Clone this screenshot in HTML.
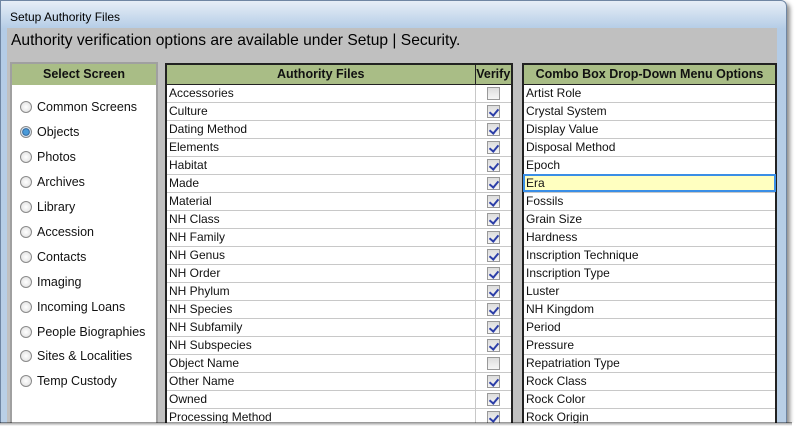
<!DOCTYPE html>
<html><head><meta charset="utf-8"><style>
*{margin:0;padding:0;box-sizing:border-box}
body{width:796px;height:433px;background:#fff;position:relative;overflow:hidden;font-family:"Liberation Sans",Arial,sans-serif;}
.abs{position:absolute}
.win{left:0;top:0;width:787px;height:424px;background:linear-gradient(#e6eef7,#b4cce6 28px,#b9cfe6);border:1px solid #6f86a3;border-top-right-radius:6px;box-shadow:3px 3px 4px rgba(0,0,0,.45)}
.title{left:10px;top:10px;font-size:12px;color:#000}
.gray{left:7px;top:28px;width:770px;height:400px;background:#c0c0c0}
.msg{left:11px;top:32px;font-size:15.6px;color:#000}
.lp{left:10px;top:62px;width:148px;height:370px;background:#fff;border:2px solid #a0a0a0;border-bottom:none}
.hdr{background:#a9bd86;font-weight:bold;font-size:12.5px;color:#111;text-align:center;height:21px;line-height:21px}
.rad{position:absolute;left:8px;font-size:12.5px;color:#111}
.rad i{display:inline-block;width:12px;height:12px;border-radius:50%;border:1px solid #8a8a8a;background:radial-gradient(#fff,#dcdcdc);vertical-align:-2px;margin-right:5px}
.rad i.on{background:radial-gradient(#4a9ad8 0 2.5px,#1d4f85 3.5px,#d8e4ef 4px)}
table{border-collapse:collapse;position:absolute;background:#fff}
td{border:1px solid #c8c8c8;height:18px;font-size:12px;color:#111;padding:0 2px;white-space:nowrap;line-height:16px}
th{background:#a9bd86;border:1px solid #222;height:20px;font-size:12.5px;color:#111}
.cb{display:inline-block;width:13px;height:13px;border:1px solid #999;background:linear-gradient(#ddd,#f6f6f6);position:relative;vertical-align:middle}
.cb.c::after{content:"";position:absolute;left:3px;top:1px;width:4px;height:7px;border:solid #2d3fa8;border-width:0 2px 2px 0;transform:rotate(40deg)}
.tear{left:0;top:423px;width:796px;height:10px;background:#fff}
</style></head><body>
<div class="abs win"></div>
<div class="abs title">Setup Authority Files</div>
<div class="abs gray"></div>
<div class="abs msg">Authority verification options are available under Setup | Security.</div>
<div class="abs lp"><div class="hdr">Select Screen</div>
<div class="rad" style="top:36px"><i></i>Common Screens</div>
<div class="rad" style="top:61px"><i class="on"></i>Objects</div>
<div class="rad" style="top:86px"><i></i>Photos</div>
<div class="rad" style="top:111px"><i></i>Archives</div>
<div class="rad" style="top:136px"><i></i>Library</div>
<div class="rad" style="top:161px"><i></i>Accession</div>
<div class="rad" style="top:186px"><i></i>Contacts</div>
<div class="rad" style="top:211px"><i></i>Imaging</div>
<div class="rad" style="top:236px"><i></i>Incoming Loans</div>
<div class="rad" style="top:261px"><i></i>People Biographies</div>
<div class="rad" style="top:285px"><i></i>Sites &amp; Localities</div>
<div class="rad" style="top:310px"><i></i>Temp Custody</div>
</div>
<table style="left:165px;top:63px;width:348px;border:2px solid #222">
<tr><th style="width:309px">Authority Files</th><th>Verify</th></tr>
<tr><td>Accessories</td><td align="center"><span class="cb"></span></td></tr>
<tr><td>Culture</td><td align="center"><span class="cb c"></span></td></tr>
<tr><td>Dating Method</td><td align="center"><span class="cb c"></span></td></tr>
<tr><td>Elements</td><td align="center"><span class="cb c"></span></td></tr>
<tr><td>Habitat</td><td align="center"><span class="cb c"></span></td></tr>
<tr><td>Made</td><td align="center"><span class="cb c"></span></td></tr>
<tr><td>Material</td><td align="center"><span class="cb c"></span></td></tr>
<tr><td>NH Class</td><td align="center"><span class="cb c"></span></td></tr>
<tr><td>NH Family</td><td align="center"><span class="cb c"></span></td></tr>
<tr><td>NH Genus</td><td align="center"><span class="cb c"></span></td></tr>
<tr><td>NH Order</td><td align="center"><span class="cb c"></span></td></tr>
<tr><td>NH Phylum</td><td align="center"><span class="cb c"></span></td></tr>
<tr><td>NH Species</td><td align="center"><span class="cb c"></span></td></tr>
<tr><td>NH Subfamily</td><td align="center"><span class="cb c"></span></td></tr>
<tr><td>NH Subspecies</td><td align="center"><span class="cb c"></span></td></tr>
<tr><td>Object Name</td><td align="center"><span class="cb"></span></td></tr>
<tr><td>Other Name</td><td align="center"><span class="cb c"></span></td></tr>
<tr><td>Owned</td><td align="center"><span class="cb c"></span></td></tr>
<tr><td>Processing Method</td><td align="center"><span class="cb c"></span></td></tr>
</table>
<table style="left:522px;top:63px;width:255px;border:2px solid #222">
<tr><th>Combo Box Drop-Down Menu Options</th></tr>
<tr><td>Artist Role</td></tr><tr><td>Crystal System</td></tr><tr><td>Display Value</td></tr><tr><td>Disposal Method</td></tr><tr><td>Epoch</td></tr>
<tr><td style="background:#ffffc0;outline:2px solid #3a8ee6;outline-offset:-2px">Era</td></tr>
<tr><td>Fossils</td></tr><tr><td>Grain Size</td></tr><tr><td>Hardness</td></tr><tr><td>Inscription Technique</td></tr><tr><td>Inscription Type</td></tr><tr><td>Luster</td></tr><tr><td>NH Kingdom</td></tr><tr><td>Period</td></tr><tr><td>Pressure</td></tr><tr><td>Repatriation Type</td></tr><tr><td>Rock Class</td></tr><tr><td>Rock Color</td></tr><tr><td>Rock Origin</td></tr>
</table>
<div class="abs tear"></div>
<div class="abs" style="left:0;top:422px;width:792px;height:4px;background:linear-gradient(rgba(0,0,0,.45),rgba(0,0,0,0))"></div>
</body></html>
